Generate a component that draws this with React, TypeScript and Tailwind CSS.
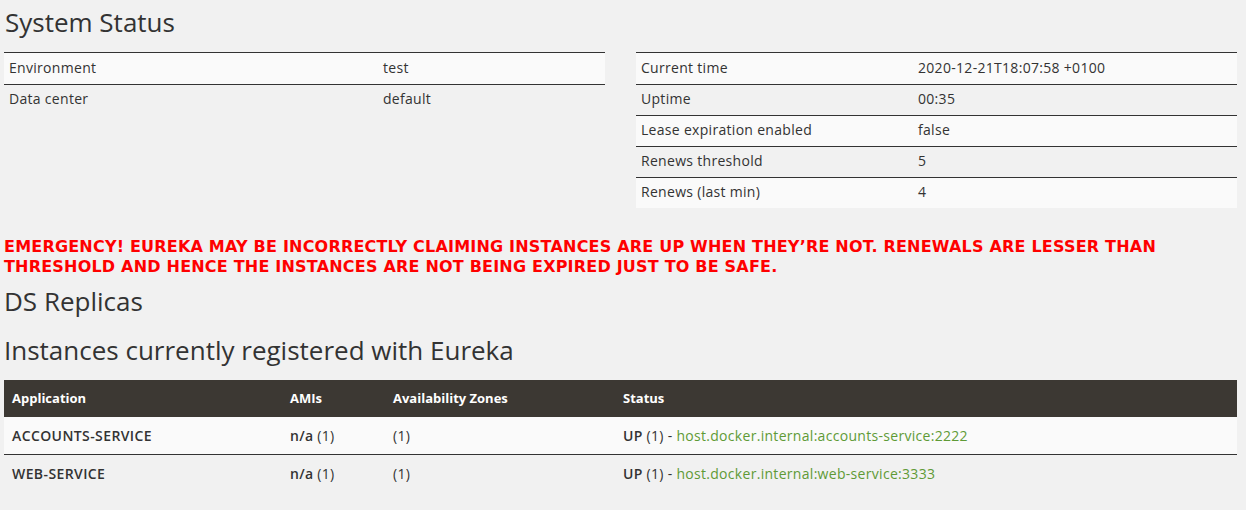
import React from 'react'

const general = [
  { name: 'Environment', value: 'test' },
  { name: 'Data center', value: 'default' },
]

const status = [
  { name: 'Current time', value: '2020-12-21T18:07:58 +0100' },
  { name: 'Uptime', value: '00:35' },
  { name: 'Lease expiration enabled', value: 'false' },
  { name: 'Renews threshold', value: '5' },
  { name: 'Renews (last min)', value: '4' },
]

const instances = [
  { app: 'ACCOUNTS-SERVICE', link: 'host.docker.internal:accounts-service:2222' },
  { app: 'WEB-SERVICE', link: 'host.docker.internal:web-service:3333' },
]

const InfoTable = ({ rows, labelWidth }: { rows: { name: string; value: string }[]; labelWidth: string }) => (
  <div className="border-t border-[#333]">
    {rows.map((row, i) => (
      <div
        key={row.name}
        className={`flex h-[31px] items-center pb-[3px] ${i > 0 ? 'border-t border-[#333]' : ''} ${i % 2 === 0 ? 'bg-[#fafafa]' : ''}`}
      >
        <div className={`${labelWidth} pl-[5px]`}>{row.name}</div>
        <div className="pl-[5px]">{row.value}</div>
      </div>
    ))}
  </div>
)

export default function App() {
  return (
    <div
      className="min-h-screen bg-[#f1f1f1] pl-[4px] pr-[9px] text-[14px] tracking-[0.3px] text-[#333]"
      style={{ fontFamily: '"Open Sans", "Noto Sans", sans-serif' }}
    >
      {/* System status */}
      <h1 className="mb-[8px] flex h-[44px] items-center pl-[1px] text-[26px] font-medium leading-none tracking-normal">System Status</h1>
      <div className="grid grid-cols-2 gap-[31px]">
        <div>
          <InfoTable rows={general} labelWidth="w-[374px]" />
        </div>
        <div>
          <InfoTable rows={status} labelWidth="w-[277px]" />
        </div>
      </div>

      <h4
        className="mt-[29px] text-[16px] font-bold uppercase leading-[20px] tracking-[0.2px] text-[#ff0000]"
        style={{ fontFamily: '"DejaVu Sans", "Liberation Sans", sans-serif' }}
      >
        Emergency! Eureka may be incorrectly claiming instances are UP when they&rsquo;re not. Renewals are lesser than
        <br />
        threshold and hence the instances are not being expired just to be safe.
      </h4>

      <h2 className="mt-[9px] flex h-[30px] items-center text-[26px] font-medium tracking-normal">DS Replicas</h2>

      <h2 className="mt-[19px] flex h-[30px] items-center text-[26px] font-medium tracking-normal">
        Instances currently registered with Eureka
      </h2>

      {/* Instances table */}
      <div className="mt-[15px]">
        <div className="flex h-[37px] items-center bg-[#3c3833] text-[13px] font-bold tracking-normal text-white">
          <div className="w-[278px] pl-[8px]">Application</div>
          <div className="w-[103px] pl-[8px]">AMIs</div>
          <div className="w-[230px] pl-[8px]">Availability Zones</div>
          <div className="pl-[8px]">Status</div>
        </div>
        {instances.map((inst, i) => (
          <div
            key={inst.app}
            className={`flex h-[37px] items-center ${i > 0 ? 'border-t border-[#333]' : ''} ${i % 2 === 0 ? 'bg-[#fafafa]' : ''}`}
          >
            <div className="w-[278px] pl-[8px] font-semibold tracking-[0.4px]">{inst.app}</div>
            <div className="w-[103px] pl-[8px]">
              <span className="font-semibold">n/a</span> (1)
            </div>
            <div className="w-[230px] pl-[8px]">(1)</div>
            <div className="pl-[8px]">
              <span className="font-semibold">UP</span> (1) -{' '}
              <a className="text-[#5f9a36]">{inst.link}</a>
            </div>
          </div>
        ))}
      </div>
    </div>
  )
}
